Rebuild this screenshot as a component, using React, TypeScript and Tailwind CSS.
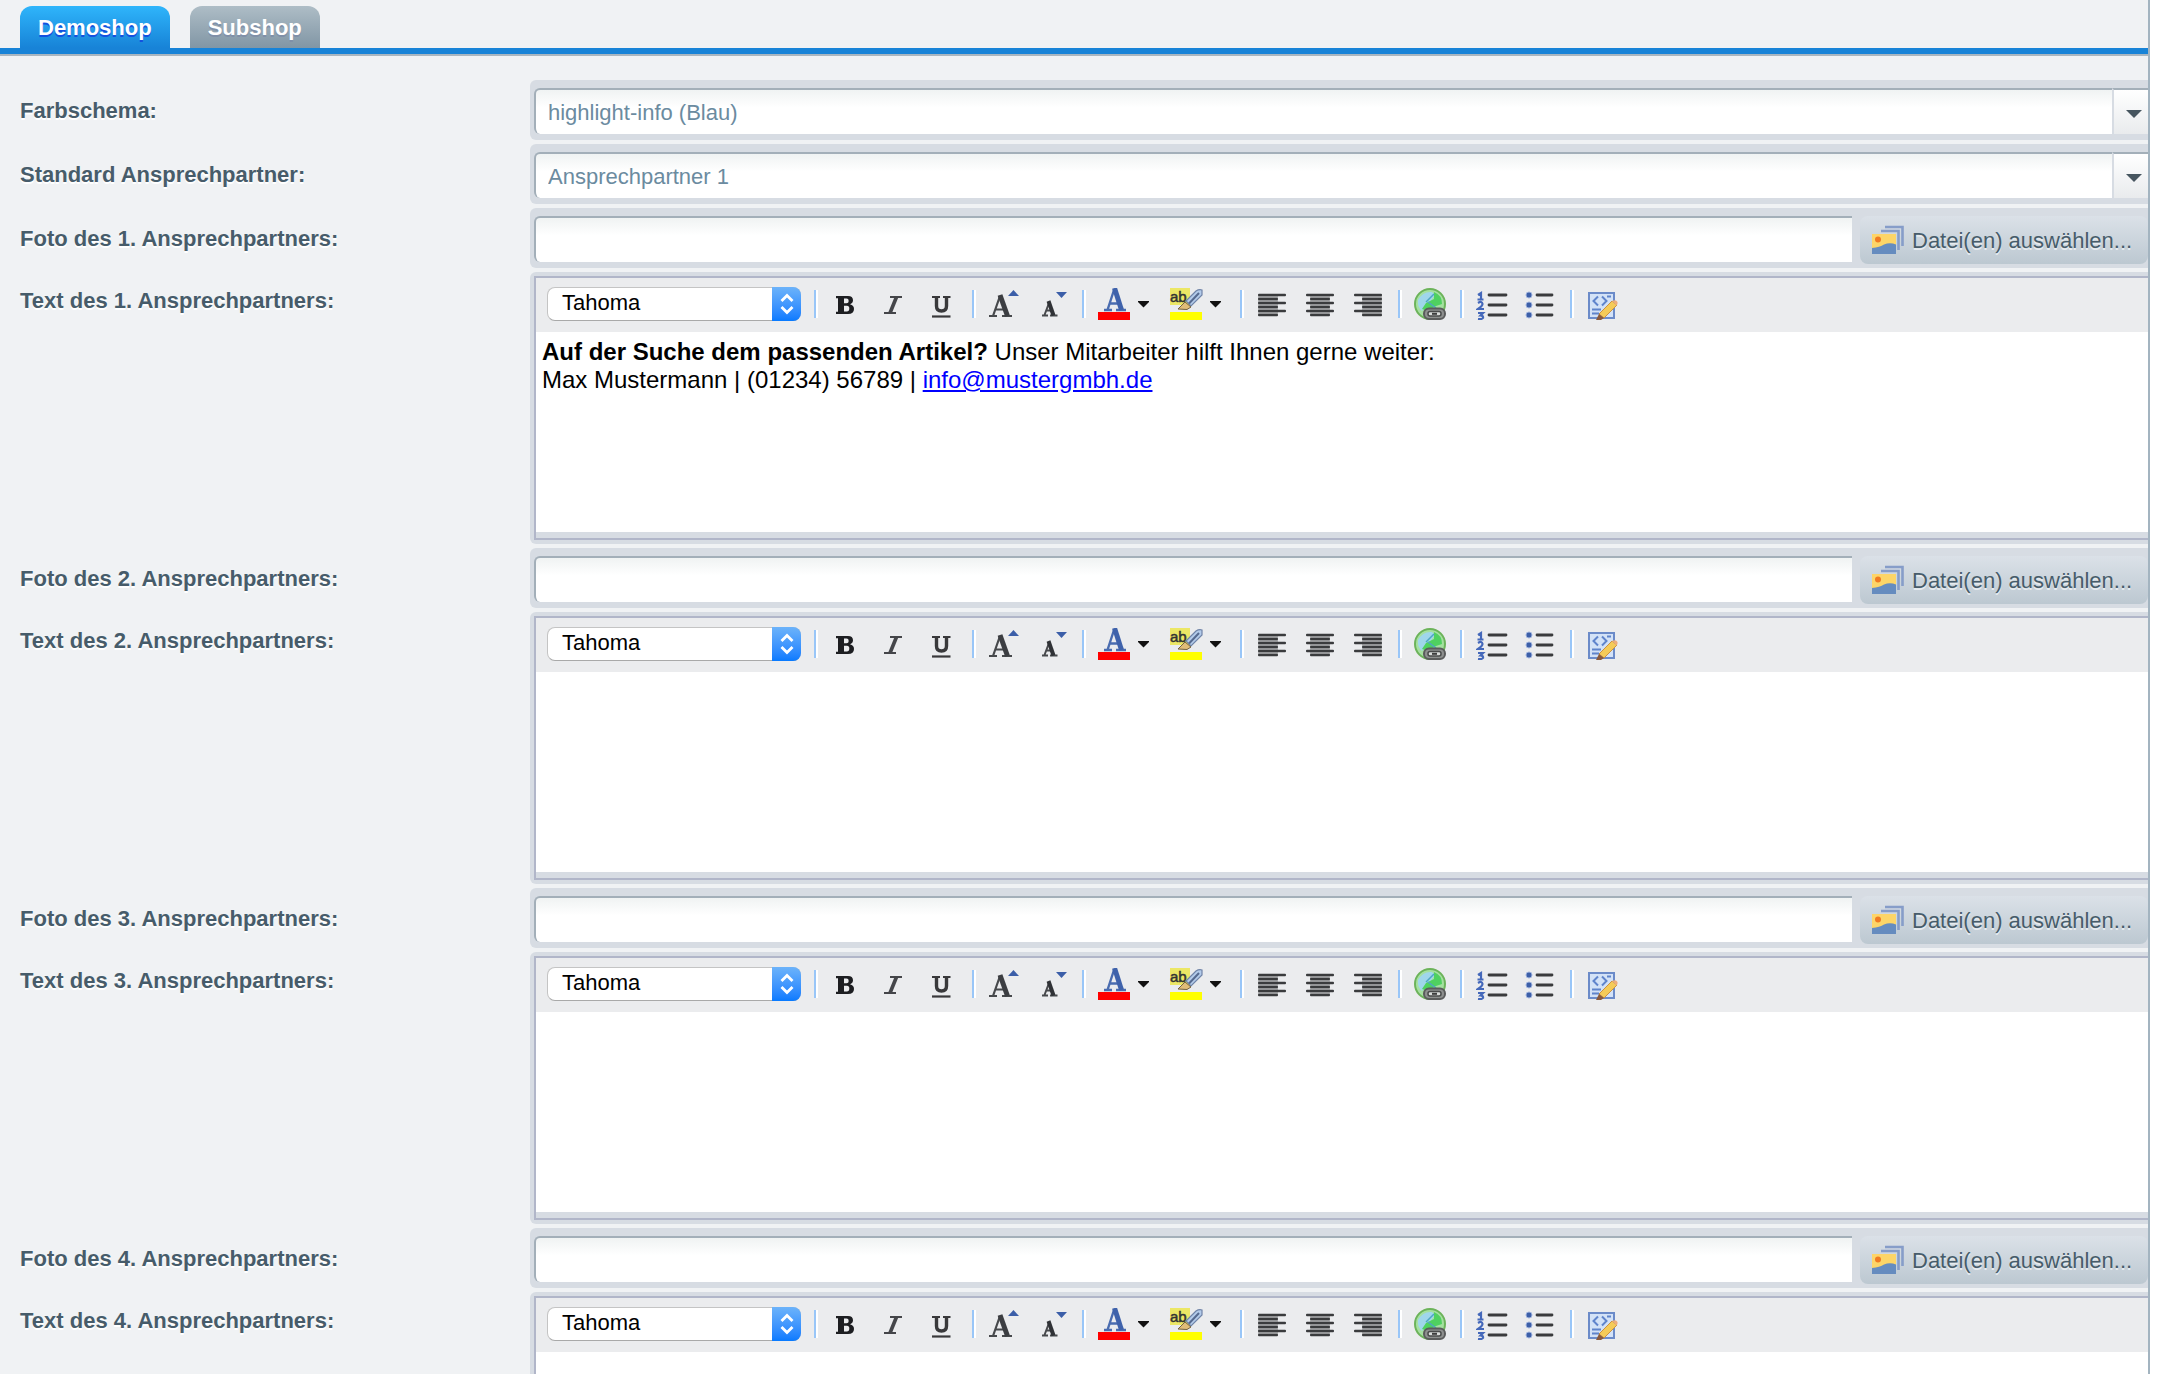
import React, { useState } from 'react';

const contacts = [1, 2, 3, 4];

const Separator: React.FC = () => (
  <span className="w-1 h-7 bg-white border-l-2 border-[#99c6f8] shrink-0" />
);

interface ToolProps {
  label: string;
  className: string;
  children: React.ReactNode;
}

const Tool: React.FC<ToolProps> = ({ label, className, children }) => (
  <button type="button" title={label} aria-label={label} className={`shrink-0 h-8 flex items-center ${className}`}>
    {children}
  </button>
);

const Caret: React.FC = () => (
  <svg width="12" height="8" viewBox="0 0 12 8"><path d="M0 1h11v1L5.500 7.500 0 2z" fill="#111" /></svg>
);

const BoldIcon = () => (
  <svg width="32" height="32" viewBox="0 0 32 32">
    <path d="M6 8h12q5 0 5 4.300 0 2.900-3 4 4 .9 4 4.700 0 5-6 5H6v-2.300h2V10.300H6zM14 10.500v4.800h2.500q2.200 0 2.200-2.400t-2.200-2.400zM14 17.800v5.700h2.800q2.500 0 2.500-2.900t-2.500-2.800z" fill="#1d1e21" fillRule="evenodd" />
  </svg>
);

const ItalicIcon = () => (
  <svg width="32" height="32" viewBox="0 0 32 32">
    <path d="M12 9h12M6 25h12" stroke="#45464a" strokeWidth="2.200" />
    <path d="M18.500 9L12 25" stroke="#45464a" strokeWidth="3.600" />
  </svg>
);

const UnderlineIcon = () => (
  <svg width="32" height="32" viewBox="0 0 32 32">
    <path d="M6 9h8M17 9h7.500" stroke="#39393b" strokeWidth="2.200" />
    <path d="M10.500 9v9q0 5 5 5t5-5V9" fill="none" stroke="#39393b" strokeWidth="3.400" />
    <path d="M6 28.500h18.500" stroke="#39393b" strokeWidth="2.200" />
  </svg>
);

const GrowIcon = () => (
  <svg width="32" height="32" viewBox="0 0 32 32">
    <path d="M1 28h8M14 28h10M5 28l7-20M7.500 21.500h9" stroke="#47494c" strokeWidth="2.200" fill="none" />
    <path d="M12 7l7.500 21" stroke="#3c3e42" strokeWidth="5" />
    <path d="M20 8h11l-5.500-6z" fill="#3b5ea8" />
  </svg>
);

const ShrinkIcon = () => (
  <svg width="32" height="32" viewBox="0 0 32 32">
    <path d="M6 27.500h6M14 27.500h7.500M8.500 27l4.500-12M9.500 22.500h7" stroke="#47494c" strokeWidth="2" fill="none" />
    <path d="M12.500 13l5 14.500" stroke="#303236" strokeWidth="4" />
    <path d="M20 4h11l-5.500 6z" fill="#3b5ea8" />
  </svg>
);

const FontColorIcon = () => (
  <svg width="32" height="32" viewBox="0 0 32 32">
    <path d="M6 22h8M18 22h10M9.500 22l6.500-20M11.500 15.500h9" stroke="#4a6cb0" strokeWidth="2.400" fill="none" />
    <path d="M16.500 0l7 22" stroke="#3f62ab" strokeWidth="5" />
    <path d="M0 24h32v8H0z" fill="#f00" />
  </svg>
);

const HighlightIcon = () => (
  <svg width="32" height="32" viewBox="0 0 32 32" className="overflow-visible">
    <path d="M0 0h20v17H0z" fill="#ece765" />
    <text x="0" y="14" fontFamily="'Liberation Sans', sans-serif" fontSize="15" stroke="#333" strokeWidth="0.500" fill="#333">ab</text>
    <path d="M16 13L26 3q3-2 6-1v5L21 18z" fill="#b3cbea" stroke="#7084a8" strokeWidth="1.200" />
    <path d="M19 15.500L29 5" stroke="#566a90" strokeWidth="2" />
    <path d="M15 14l6 5-4 2.500-9-.5z" fill="#e0bd78" stroke="#75633c" />
    <path d="M0 24h32v8H0z" fill="#ff0" />
  </svg>
);

const AlignIcon: React.FC<{ align: 'left' | 'center' | 'right' }> = ({ align }) => (
  <svg width="32" height="32" viewBox="0 0 32 32">
    {[0, 1, 2, 3, 4].map((i) => (
      <rect key={i} x={align === 'left' ? 2 : align === 'right' ? 10 : 6} y={8 + i * 4} width="20" height="2" fill="#b3b4b6" />
    ))}
    {[0, 1, 2, 3, 4, 5].map((i) => {
      const w = i % 2 ? 20 : 28;
      const x = align === 'left' ? 2 : align === 'right' ? 30 - w : 16 - w / 2;
      return <rect key={i} x={x} y={5.800 + i * 4} width={w} height="2.400" rx="1" fill="#3a3b3d" />;
    })}
  </svg>
);

const LinkIcon = () => (
  <svg width="32" height="32" viewBox="0 0 32 32">
    <circle cx="16" cy="16" r="15" fill="#a5e0a0" stroke="#6cb35a" strokeWidth="2" />
    <path d="M4 12Q9 3 18 4l3 3-6 8-7 8q-5-4-4-11z" fill="#9fd6ec" />
    <path d="M20 4q8 3 8 12l-6 2-8 5-6-2 4-6 8-4z" fill="#4fd160" />
    <path d="M20 6l-8 8M14 14l8 6" stroke="#4fa6c4" strokeWidth="1.500" />
    <rect x="10" y="20.500" width="21" height="10.500" rx="5" fill="#8e908f" stroke="#5b5c5c" strokeWidth="2" />
    <rect x="14" y="23.500" width="13" height="4.500" rx="2" fill="#d9dbda" stroke="#4a4b4b" strokeWidth="1.500" />
    <path d="M18 25.800h5" stroke="#3d3d3d" strokeWidth="2" />
  </svg>
);

const OrderedIcon = () => (
  <svg width="32" height="32" viewBox="0 0 32 32">
    <path d="M2 7l3-2V11M1.500 11.500h6M2 15q4-2.500 4.500 1 0 2-4.500 5h6M2 25h5l-2.500 2.500q3 0 2.500 2.500-1 1.500-5 1" fill="none" stroke="#4468ba" strokeWidth="2.200" />
    <path d="M13 7h17M13 17h17M13 27h17" stroke="#3a3b3d" strokeWidth="2.800" strokeLinecap="round" />
  </svg>
);

const BulletIcon = () => (
  <svg width="32" height="32" viewBox="0 0 32 32">
    <g fill="#3d5fa8" stroke="#9db1dc" strokeWidth="1">
      <circle cx="5" cy="7" r="3" />
      <circle cx="5" cy="17" r="3" />
      <circle cx="5" cy="27" r="3" />
    </g>
    <path d="M13 7h15M13 17h15M13 27h15" stroke="#3a3b3d" strokeWidth="2.800" strokeLinecap="round" />
  </svg>
);

const SourceIcon = () => (
  <svg width="32" height="32" viewBox="0 0 32 32">
    <rect x="3" y="5" width="25" height="25" fill="#d3e2f7" stroke="#6b8bc9" strokeWidth="2" />
    <path d="M12 8.500L7.500 13l4.500 4.500M16 8.500l4.500 4.500-4.500 4.500M6 21.500h9M6 25.500h7M21 8.500h4" fill="none" stroke="#5f84cc" strokeWidth="2" />
    <path d="M26 13l5 4-13 13-5-4z" fill="#f5cb58" stroke="#cc9140" />
    <path d="M26 13q4-2 5.500 1 .5 2-1 3.500z" fill="#efae7a" />
    <path d="M13 26l5 4-3 2h-5z" fill="#8a5a3c" />
  </svg>
);

const PicturesIcon = () => (
  <svg width="32" height="30" viewBox="0 0 32 30">
    <path d="M13 2h17.500V21M9 6h17.500V25" fill="none" stroke="#869dc9" strokeWidth="2.600" />
    <path d="M0 9h24v20H0z" fill="#fdd568" />
    <circle cx="6" cy="14.500" r="3" fill="#f07a22" />
    <path d="M0 23q8-1 12-3.500 6-2.500 12 0V29H0z" fill="#668cbf" />
  </svg>
);

const Combo: React.FC<{ id: string; value: string }> = ({ id, value }) => (
  <div className="h-[60px] pt-2 pb-[6px] pl-1 bg-[#d7dce3] rounded-l-md flex">
    <input
      id={id}
      defaultValue={value}
      className="flex-1 min-w-0 h-[46px] pl-3 pt-[2px] text-[22px] text-[#6b8ba0] outline-none border-t-2 border-l-2 border-[#a3afb9] rounded-l-md bg-linear-to-b from-[#f0f3f3] to-white to-40%"
    />
    <button type="button" aria-label="Liste öffnen" className="w-9 h-[46px] pt-1 border-l-2 border-[#d7dce3] border-t-2 border-t-[#a3afb9] bg-linear-to-b from-white to-[#e9ebed] flex items-center justify-end pr-[6px]">
      <svg width="16" height="10" viewBox="0 0 16 10"><path d="M0 1h16L8 9z" fill="#46555f" /></svg>
    </button>
  </div>
);

const FileField: React.FC<{ id: string }> = ({ id }) => (
  <div className="h-[60px] pt-2 pl-1 bg-[#d7dce3] rounded-l-md flex items-start gap-2">
    <input
      id={id}
      className="flex-1 min-w-0 h-[46px] pl-3 text-[22px] text-[#6b8ba0] outline-none border-t-2 border-l-2 border-[#a3afb9] rounded-l-md bg-linear-to-b from-[#f0f3f3] to-white to-40%"
    />
    <button type="button" className="w-72 h-12 pl-3 rounded-lg bg-linear-to-b from-[#dbe1e8] to-[#bcc8d1] flex items-center gap-2 text-[22px] text-[#475c6a] whitespace-nowrap [text-shadow:0_2px_0_#e6ebef]">
      <PicturesIcon />
      Datei(en) auswählen...
    </button>
  </div>
);

const Editor: React.FC<{ id: string; children?: React.ReactNode }> = ({ id, children }) => (
  <div className="p-1 pr-0 bg-[#d7dce3] rounded-l-md">
    <div className="border-2 border-r-0 border-[#b1b6c9]">
      <div className="h-[54px] px-[11px] pb-[2px] bg-[#ebecee] flex items-center">
        <div className="relative w-[254px] h-[34px] shrink-0">
          <select aria-label="Schriftart" className="appearance-none w-full h-full pl-[14px] pb-[2px] text-[22px] leading-7 text-black bg-white border border-[#c4c4c4] border-b-[#a9a9a9] rounded-lg outline-none">
            <option>Tahoma</option>
          </select>
          <span className="absolute right-0 top-0 w-[29px] h-[34px] rounded-r-lg bg-linear-to-b from-[#6cb3fa] to-[#067aff] flex items-center justify-center pointer-events-none">
            <svg width="14" height="22" viewBox="0 0 14 22"><path d="M1.500 8L7 2.500 12.500 8M1.500 14L7 19.500l5.500-5.500" fill="none" stroke="#fff" strokeWidth="2.800" /></svg>
          </span>
        </div>
        <div className="flex items-center ml-[13px]">
          <Separator />
          <Tool label="Fett" className="ml-3"><BoldIcon /></Tool>
          <Tool label="Kursiv" className="ml-4"><ItalicIcon /></Tool>
          <Tool label="Unterstrichen" className="ml-4 mr-[14px]"><UnderlineIcon /></Tool>
          <Separator />
          <Tool label="Text vergrößern" className="ml-3"><GrowIcon /></Tool>
          <Tool label="Text verkleinern" className="ml-4 mr-[14px]"><ShrinkIcon /></Tool>
          <Separator />
          <Tool label="Schriftfarbe" className="ml-3 gap-2"><FontColorIcon /><Caret /></Tool>
          <Tool label="Hintergrundfarbe" className="ml-5 mr-[18px] gap-2"><HighlightIcon /><Caret /></Tool>
          <Separator />
          <Tool label="Linksbündig" className="ml-3"><AlignIcon align="left" /></Tool>
          <Tool label="Zentriert" className="ml-4"><AlignIcon align="center" /></Tool>
          <Tool label="Rechtsbündig" className="ml-4 mr-[14px]"><AlignIcon align="right" /></Tool>
          <Separator />
          <Tool label="Link" className="ml-3 mr-[14px]"><LinkIcon /></Tool>
          <Separator />
          <Tool label="Nummerierte Liste" className="ml-3"><OrderedIcon /></Tool>
          <Tool label="Aufzählung" className="ml-4 mr-[14px]"><BulletIcon /></Tool>
          <Separator />
          <Tool label="Quelltext" className="ml-3"><SourceIcon /></Tool>
        </div>
      </div>
      <div
        id={id}
        role="textbox"
        aria-multiline="true"
        aria-labelledby={`${id}-label`}
        contentEditable
        suppressContentEditableWarning
        className="h-[206px] px-[6px] py-[6px] bg-white border-b-[6px] border-[#d7dce3] text-2xl leading-7 text-black outline-none"
      >
        {children}
      </div>
    </div>
  </div>
);

interface RowProps {
  id: string;
  label: string;
  tall?: boolean;
  children: React.ReactNode;
}

const Row: React.FC<RowProps> = ({ id, label, tall, children }) => (
  <div className="flex">
    <label
      id={`${id}-label`}
      htmlFor={id}
      className={`w-[510px] shrink-0 text-[22px] leading-6 font-bold text-[#475c6a] [text-shadow:0_2px_0_#fff] ${tall ? 'pt-[17px]' : 'pt-[19px]'}`}
    >
      {label}
    </label>
    <div className="flex-1 min-w-0">{children}</div>
  </div>
);

const App: React.FC = () => {
  const [shop, setShop] = useState('Demoshop');

  return (
    <div className="h-screen overflow-hidden bg-white pr-[14px] font-['Liberation_Sans',Arial,sans-serif]">
      <div className="h-full overflow-hidden bg-[#f0f2f4] border-r-2 border-[#a3b4c0]">
        <div role="tablist" className="flex gap-5 pl-5 pt-[6px] border-b-[6px] border-[#1883d7]">
          {['Demoshop', 'Subshop'].map((name) => (
            <button
              key={name}
              type="button"
              role="tab"
              aria-selected={shop === name}
              onClick={() => setShop(name)}
              className={
                'h-[42px] px-[18px] pt-[1px] rounded-t-xl text-[22px] font-bold text-white bg-linear-to-b ' +
                (shop === name
                  ? 'from-[#2fb5fb] to-[#1883d7] [text-shadow:0_2px_0_#1450e0]'
                  : 'from-[#aebdc6] to-[#8196a5] [text-shadow:0_2px_0_#8090a8]')
              }
            >
              {name}
            </button>
          ))}
        </div>
        <div className="border-t-2 border-[#a9b6c0] pt-6 pl-5 flex flex-col gap-1">
          <Row id="scheme" label="Farbschema:">
            <Combo id="scheme" value="highlight-info (Blau)" />
          </Row>
          <Row id="default-contact" label="Standard Ansprechpartner:">
            <Combo id="default-contact" value="Ansprechpartner 1" />
          </Row>
          {contacts.map((n) => (
            <React.Fragment key={n}>
              <Row id={`photo-${n}`} label={`Foto des ${n}. Ansprechpartners:`}>
                <FileField id={`photo-${n}`} />
              </Row>
              <Row id={`text-${n}`} label={`Text des ${n}. Ansprechpartners:`} tall>
                <Editor id={`text-${n}`}>
                  {n === 1 && (
                    <>
                      <b>Auf der Suche dem passenden Artikel?</b> Unser Mitarbeiter hilft Ihnen gerne weiter:
                      <br />
                      Max Mustermann | (01234) 56789 | <a href="mailto:info@mustergmbh.de" className="text-[#00f] underline">info@mustergmbh.de</a>
                    </>
                  )}
                </Editor>
              </Row>
            </React.Fragment>
          ))}
        </div>
      </div>
    </div>
  );
};

export default App;
